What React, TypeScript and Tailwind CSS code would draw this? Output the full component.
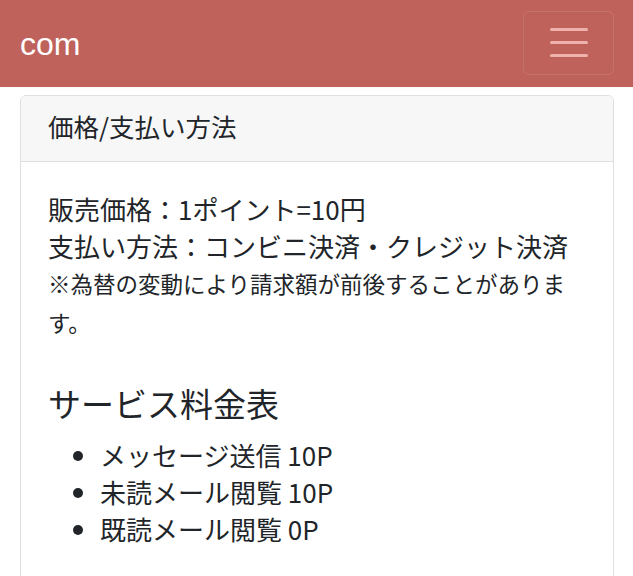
export default function App() {
  return (
    <div className="min-h-screen bg-white text-[#212529] font-['Noto_Sans_CJK_JP','Noto_Sans',sans-serif]">
      {/* ナビバー */}
      <nav className="h-[87px] bg-[#c0625c] flex items-center justify-between pl-5 pr-[19px]">
        <span className="text-white text-[32px] font-['Liberation_Sans',sans-serif] leading-none">com</span>
        <button
          type="button"
          className="w-[91px] h-[64px] -mt-[2px] rounded-md border border-white/10 flex flex-col items-center justify-center gap-[10px]"
        >
          <span className="block w-[38px] h-[3px] rounded-full bg-[#efb1ac]" />
          <span className="block w-[38px] h-[3px] rounded-full bg-[#efb1ac]" />
          <span className="block w-[38px] h-[3px] rounded-full bg-[#efb1ac]" />
        </button>
      </nav>

      {/* カード */}
      <div className="ml-5 mr-[19px] mt-2 border border-[#dfdfdf] rounded-md overflow-hidden">
        <div className="bg-[#f7f7f7] border-b border-[#dfdfdf] px-[27px] pt-[11px] pb-[17px] text-[25.5px] leading-[37px]">
          価格/支払い方法
        </div>
        <div className="px-[27px] pt-[28px] pb-[60px]">
          <p className="text-[26px] leading-[37px]">
            販売価格：1ポイント=10円
            <br />
            支払い方法：コンビニ決済・クレジット決済
          </p>
          <p className="text-[22.5px] leading-[39px]">※為替の変動により請求額が前後することがあります。</p>

          <h4 className="mt-[42px] text-[33px] leading-[38px]">サービス料金表</h4>
          <ul className="mt-[14px] list-disc pl-[52px] text-[26px] leading-[37px]">
            <li>メッセージ送信 10P</li>
            <li>未読メール閲覧 10P</li>
            <li>既読メール閲覧 0P</li>
          </ul>
        </div>
      </div>
    </div>
  );
}
